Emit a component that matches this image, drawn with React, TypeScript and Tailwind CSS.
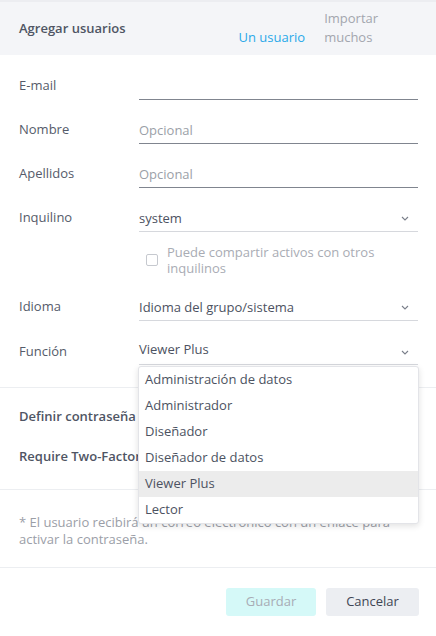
import React from 'react';

const Chevron = () => (
  <svg width="8" height="5" viewBox="0 0 8 5" className="shrink-0">
    <polyline points="1,1 4,4 7,1" fill="none" stroke="#7a7f8a" strokeWidth="1.1" />
  </svg>
);

const TextField = ({ label, placeholder }: { label: string; placeholder?: string }) => (
  <div className="flex items-center">
    <div className="w-[120px] pt-[1px] text-[13px] text-[#555b6a]">{label}</div>
    <div className="flex h-[29px] w-[279px] items-center border-b border-[#80858f] pt-[3px] text-[13px] text-[#9b9fa8]">
      {placeholder}
    </div>
  </div>
);

const SelectField = ({ label, value }: { label: string; value: string }) => (
  <div className="flex items-center">
    <div className="w-[120px] pt-[1px] text-[13px] text-[#555b6a]">{label}</div>
    <div className="flex h-[29px] w-[279px] items-center justify-between border-b border-[#d6d8dd] pt-[3px] pr-[9px] text-[13px] text-[#4c5261]">
      <span>{value}</span>
      <Chevron />
    </div>
  </div>
);

const options = [
  'Administración de datos',
  'Administrador',
  'Diseñador',
  'Diseñador de datos',
  'Viewer Plus',
  'Lector',
];

export default function App() {
  return (
    <div
      className="relative h-[636px] w-[436px] overflow-hidden bg-white"
      style={{ fontFamily: '"Open Sans", "Noto Sans", sans-serif' }}
    >
      {/* Header */}
      <div className="flex h-[55px] items-end border-t-2 border-[#ecedf1] bg-[#f4f5f8] pb-[8px] pl-[19px]">
        <div className="mb-[9px] text-[13px] font-semibold text-[#4f5564]">Agregar usuarios</div>
        <div className="ml-[113px] flex items-end gap-[19px] text-[13px] leading-[19px]">
          <span className="text-[#2aa9e9]">Un usuario</span>
          <span className="w-[58px] text-[#a3a6ae]">Importar muchos</span>
        </div>
      </div>

      {/* Form */}
      <div className="flex flex-col gap-[15px] pl-[19px] pt-[16px] pb-[22px]">
        <TextField label="E-mail" />
        <TextField label="Nombre" placeholder="Opcional" />
        <TextField label="Apellidos" placeholder="Opcional" />
        <div className="pb-[1px]">
          <SelectField label="Inquilino" value="system" />
          <div className="ml-[127px] mt-[12px] flex items-start gap-[9px]">
            <div className="mt-[10px] h-[12px] w-[12px] rounded-[2px] border border-[#c6c9cf]" />
            <span className="w-[240px] text-[13px] leading-[16px] text-[#a9acb4]">
              Puede compartir activos con otros inquilinos
            </span>
          </div>
        </div>
        <SelectField label="Idioma" value="Idioma del grupo/sistema" />
        <div className="flex items-center">
          <div className="w-[120px] pt-[2px] text-[13px] text-[#555b6a]">Función</div>
          <div className="flex h-[29px] w-[279px] items-center justify-between border-b border-[#d6d8dd] pb-[1px] pr-[9px] text-[13px] text-[#4c5261]">
            <span>Viewer Plus</span>
            <span className="pt-[5px]">
              <Chevron />
            </span>
          </div>
        </div>
      </div>

      {/* Password section */}
      <div className="border-t border-[#eceef1] pl-[19px] pt-[9px] pb-[12px]">
        <div className="flex h-[40px] items-center text-[13px] font-semibold text-[#4f5564]">Definir contraseña</div>
        <div className="flex h-[40px] items-center text-[13px] font-semibold text-[#4f5564]">Require Two-Factor</div>
      </div>

      {/* Note */}
      <div className="border-t border-[#eceef1] px-[19px] pt-[24px] pb-[19px] text-[13px] leading-[17px] text-[#9b9ea7]">
        * El usuario recibirá un correo electrónico con un enlace para activar la contraseña.
      </div>

      {/* Footer */}
      <div className="flex justify-end gap-[10px] border-t border-[#eceef1] pr-[17px] pt-[20px]">
        <button className="h-[28px] w-[90px] rounded-[3px] bg-[#d5f9f8] text-[13px] text-[#a8acb5]">Guardar</button>
        <button className="h-[28px] w-[93px] rounded-[3px] bg-[#eceef2] text-[13px] text-[#3f4554]">Cancelar</button>
      </div>

      {/* Open dropdown menu */}
      <div className="absolute left-[138px] top-[366px] w-[281px] rounded-[3px] border border-[#e3e4e8] bg-white shadow-[0_2px_6px_rgba(0,0,0,0.12)]">
        {options.map((o) => (
          <div
            key={o}
            className={
              'flex h-[26px] items-center pl-[6px] text-[13px] text-[#4c5261] ' +
              (o === 'Viewer Plus' ? 'bg-[#ececec]' : '')
            }
          >
            {o}
          </div>
        ))}
      </div>
    </div>
  );
}
